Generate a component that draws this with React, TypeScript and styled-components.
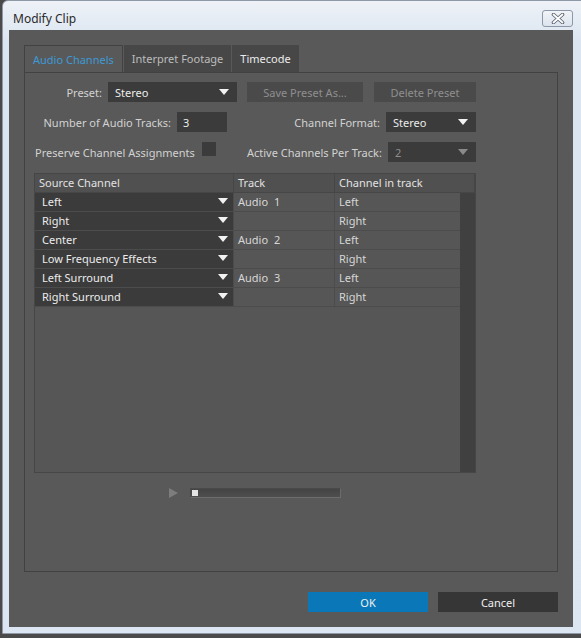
import { Fragment } from "react"
import styled, { createGlobalStyle } from "styled-components"

const GlobalStyle = createGlobalStyle`
  html, body {
    margin: 0;
    padding: 0;
    background: #4a4a4a;
  }
  * {
    box-sizing: border-box;
  }
`

const SPage = styled.div`
  width: 581px;
  height: 638px;
  overflow: hidden;
  padding-left: 2px;
  font-family: "Noto Sans", "Open Sans", sans-serif;
`

const SWindow = styled.div`
  width: 585px;
  height: 634px;
  border-radius: 6px 6px 0 0;
  border: 1px solid #8e98a6;
  background: linear-gradient(#eef2f7, #dbe5f1 40px, #dce6f2);
  display: flex;
  flex-direction: column;
  padding: 0 0 6px 6px;
`

const STitleBar = styled.div`
  height: 29px;
  display: flex;
  align-items: flex-start;
  justify-content: space-between;
  padding: 9px 13px 0 4px;
`

const STitle = styled.div`
  font-family: "Noto Sans", sans-serif;
  font-size: 12px;
  line-height: 17px;
  color: #2a2a2a;
`

const SCloseButton = styled.div`
  width: 31px;
  height: 17px;
  border: 1px solid #8d97a5;
  border-radius: 3px;
  background: linear-gradient(#f1f4f8, #dde4ee);
  display: flex;
  align-items: center;
  justify-content: center;
`

const SContent = styled.div`
  width: 564px;
  flex: 1;
  background: #595959;
  padding: 15px 0 0 15px;
  display: flex;
  flex-direction: column;
`

const STabs = styled.div`
  display: flex;
  height: 27px;
  gap: 1px;
`

const STab = styled.div<{ $active?: boolean; $bright?: boolean }>`
  height: 27px;
  padding: 0 8px;
  display: flex;
  align-items: center;
  font-size: 11px;
  background: ${({ $active }) => ($active ? "#595959" : "#474747")};
  color: ${({ $active, $bright }) =>
    $active ? "#3d9ad6" : $bright ? "#ececec" : "#bdbdbd"};
  border: ${({ $active }) => ($active ? "1px solid #424242" : "none")};
  border-bottom: none;
  margin-bottom: ${({ $active }) => ($active ? "-1px" : "0")};
  position: relative;
  z-index: 1;
`

const SPanel = styled.div`
  width: 534px;
  height: 500px;
  border: 1px solid #424242;
  padding: 9px 0 0 9px;
  display: flex;
  flex-direction: column;
`

const SFormGrid = styled.div`
  display: grid;
  grid-template-columns: 203px 229px;
  column-gap: 10px;
  row-gap: 10px;
  margin-bottom: 11px;
`

const SCell = styled.div<{ $justify?: string; $padRight?: number; $gap?: number }>`
  display: flex;
  align-items: center;
  height: 20px;
  justify-content: ${({ $justify }) => $justify || "flex-end"};
  padding-right: ${({ $padRight }) => $padRight || 0}px;
  gap: ${({ $gap }) => ($gap === undefined ? 6 : $gap)}px;
`

const SLabel = styled.span<{ $indent?: number }>`
  font-size: 11px;
  color: #d2d2d2;
  white-space: nowrap;
  margin-left: ${({ $indent }) => $indent || 0}px;
`

const SSelect = styled.div<{ $width: number; $disabled?: boolean }>`
  width: ${({ $width }) => $width}px;
  height: 20px;
  background: #3b3b3b;
  color: ${({ $disabled }) => ($disabled ? "#8e8e8e" : "#ececec")};
  font-size: 11px;
  display: flex;
  align-items: center;
  justify-content: space-between;
  padding: 0 8px 0 7px;
`

const SArrow = styled.span<{ $disabled?: boolean }>`
  width: 0;
  height: 0;
  border-left: 5px solid transparent;
  border-right: 5px solid transparent;
  border-top: 6px solid ${({ $disabled }) => ($disabled ? "#8a8a8a" : "#f2f2f2")};
`

const SInput = styled.div`
  width: 50px;
  height: 20px;
  background: #3b3b3b;
  color: #ececec;
  font-size: 11px;
  display: flex;
  align-items: center;
  padding-left: 6px;
`

const SCheckbox = styled.div`
  width: 14px;
  height: 14px;
  background: #3b3b3b;
  margin-top: -6px;
`

const SGhostButton = styled.div<{ $width: number }>`
  width: ${({ $width }) => $width}px;
  height: 20px;
  background: #4a4a4a;
  color: #8f8f8f;
  font-size: 11px;
  display: flex;
  align-items: center;
  justify-content: center;
`

const STable = styled.div`
  width: 442px;
  height: 300px;
  border: 1px solid #464646;
  background: #565656;
  display: grid;
  grid-template-columns: 199px 101px 125px 15px;
  grid-template-rows: 19px repeat(6, 19px) 1fr;
`

const SHeadCell = styled.div<{ $span?: boolean }>`
  grid-column: ${({ $span }) => ($span ? "3 / 5" : "auto")};
  background: #505050;
  color: #e2e2e2;
  font-size: 11px;
  display: flex;
  align-items: center;
  padding: 0 0 1px 4px;
  border-bottom: 1px solid #464646;
  border-right: 1px solid #464646;
`

const SScrollTrack = styled.div`
  grid-column: 4;
  grid-row: 2 / 9;
  background: #404040;
`

const SSourceCell = styled.div`
  background: #3b3b3b;
  color: #ececec;
  font-size: 11px;
  display: flex;
  align-items: center;
  justify-content: space-between;
  padding: 0 5px 2px 7px;
  border-bottom: 1px solid #4c4c4c;
  border-right: 1px solid #4c4c4c;
`

const SDataCell = styled.div<{ $last?: boolean }>`
  color: #d6d6d6;
  font-size: 11px;
  display: flex;
  align-items: center;
  padding: 0 0 2px 4px;
  border-bottom: 1px solid #4c4c4c;
  border-right: ${({ $last }) => ($last ? "none" : "1px solid #4c4c4c")};
  word-spacing: 3px;
`

const STransport = styled.div`
  display: flex;
  align-items: center;
  gap: 12px;
  margin: 15px 0 0 135px;
`

const SPlay = styled.span`
  width: 0;
  height: 0;
  border-top: 5px solid transparent;
  border-bottom: 5px solid transparent;
  border-left: 9px solid #7d7d7d;
`

const SSlider = styled.div`
  width: 151px;
  height: 10px;
  background: linear-gradient(#444, #4e4e4e);
  border: 1px solid #4a4a4a;
  border-bottom-color: #6c6c6c;
  border-right-color: #6c6c6c;
  display: flex;
  align-items: center;
  padding-left: 1px;
`

const SThumb = styled.div`
  width: 6px;
  height: 6px;
  background: #e4e4e4;
`

const SFooter = styled.div`
  width: 534px;
  display: flex;
  justify-content: flex-end;
  gap: 10px;
  margin-top: 20px;
`

const SButton = styled.div<{ $primary?: boolean }>`
  width: 120px;
  height: 20px;
  background: ${({ $primary }) => ($primary ? "#0a78b8" : "#363636")};
  color: #f0f0f0;
  font-size: 11px;
  display: flex;
  align-items: center;
  justify-content: center;
`

const rows = [
  { source: "Left", track: "Audio 1", channel: "Left" },
  { source: "Right", track: "", channel: "Right" },
  { source: "Center", track: "Audio 2", channel: "Left" },
  { source: "Low Frequency Effects", track: "", channel: "Right" },
  { source: "Left Surround", track: "Audio 3", channel: "Left" },
  { source: "Right Surround", track: "", channel: "Right" },
]

const CloseIcon = () => (
  <svg width="14" height="11" viewBox="0 0 14 11">
    <path
      d="M2.5 1.5 L11.5 9.5 M11.5 1.5 L2.5 9.5"
      stroke="#5a6270"
      strokeWidth="3.6"
      strokeLinecap="round"
    />
    <path
      d="M2.5 1.5 L11.5 9.5 M11.5 1.5 L2.5 9.5"
      stroke="#ffffff"
      strokeWidth="1.8"
      strokeLinecap="round"
    />
  </svg>
)

const App = () => {
  return (
    <SPage>
      <GlobalStyle />
      <SWindow>
        <STitleBar>
          <STitle>Modify Clip</STitle>
          <SCloseButton>
            <CloseIcon />
          </SCloseButton>
        </STitleBar>
        <SContent>
          <STabs>
            <STab $active>Audio Channels</STab>
            <STab>Interpret Footage</STab>
            <STab $bright>Timecode</STab>
          </STabs>
          <SPanel>
            <SFormGrid>
              <SCell>
                <SLabel>Preset:</SLabel>
                <SSelect $width={129}>
                  Stereo
                  <SArrow />
                </SSelect>
              </SCell>
              <SCell $justify="flex-start" $gap={11}>
                <SGhostButton $width={116}>Save Preset As...</SGhostButton>
                <SGhostButton $width={102}>Delete Preset</SGhostButton>
              </SCell>

              <SCell $padRight={10}>
                <SLabel>Number of Audio Tracks:</SLabel>
                <SInput>3</SInput>
              </SCell>
              <SCell>
                <SLabel>Channel Format:</SLabel>
                <SSelect $width={90}>
                  Stereo
                  <SArrow />
                </SSelect>
              </SCell>

              <SCell $justify="flex-start" $gap={7}>
                <SLabel $indent={1}>Preserve Channel Assignments</SLabel>
                <SCheckbox />
              </SCell>
              <SCell>
                <SLabel>Active Channels Per Track:</SLabel>
                <SSelect $width={90} $disabled>
                  2
                  <SArrow $disabled />
                </SSelect>
              </SCell>
            </SFormGrid>

            <STable>
              <SHeadCell>Source Channel</SHeadCell>
              <SHeadCell>Track</SHeadCell>
              <SHeadCell $span>Channel in track</SHeadCell>
              {rows.map((row, i) => (
                <Fragment key={row.source}>
                  <SSourceCell>
                    {row.source}
                    <SArrow />
                  </SSourceCell>
                  <SDataCell>{row.track}</SDataCell>
                  <SDataCell $last>{row.channel}</SDataCell>
                  {i === 0 ? <SScrollTrack /> : null}
                </Fragment>
              ))}
            </STable>

            <STransport>
              <SPlay />
              <SSlider>
                <SThumb />
              </SSlider>
            </STransport>
          </SPanel>
          <SFooter>
            <SButton $primary>OK</SButton>
            <SButton>Cancel</SButton>
          </SFooter>
        </SContent>
      </SWindow>
    </SPage>
  )
}

export default App
